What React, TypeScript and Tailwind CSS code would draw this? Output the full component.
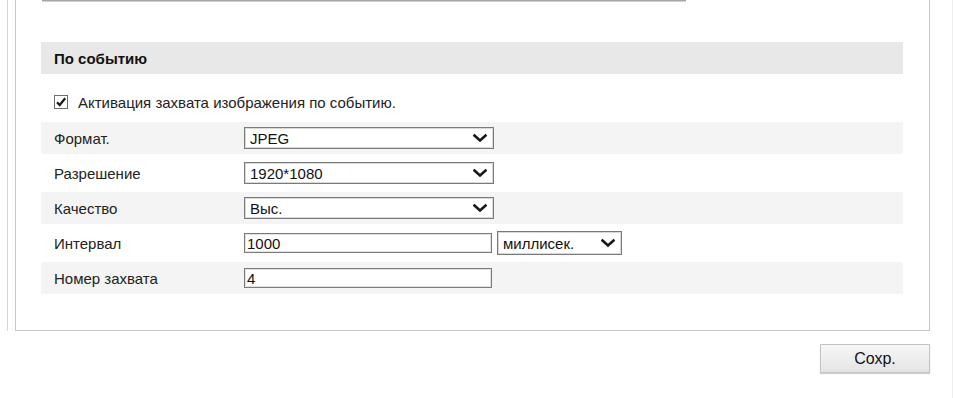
import React from "react";

function Chevron() {
  return (
    <svg width="14" height="10" viewBox="0 0 14 10" className="pointer-events-none absolute right-[6px] top-1/2 -translate-y-1/2">
      <path d="M1.5 2.5 L7 7.5 L12.5 2.5" fill="none" stroke="#1a1a1a" strokeWidth="2.6" strokeLinecap="square" />
    </svg>
  );
}

function Select({ value, w, h }: { value: string; w: string; h: string }) {
  return (
    <div className={`relative ${w} ${h} border border-[#7a7a7a] bg-white shadow-[inset_0_0_0_1px_#d9d9d9] flex items-center pl-[5px] text-[15px] leading-none text-[#111]`}>
      <span>{value}</span>
      <Chevron />
    </div>
  );
}

function TextBox({ value }: { value: string }) {
  return (
    <div className="w-[248px] h-[20px] border border-[#7a7a7a] bg-white shadow-[inset_0_0_0_1px_#e2e2e2] flex items-center pl-[2px] text-[15px] leading-none text-[#111]">
      {value}
    </div>
  );
}

function Row({ label, gray, children }: { label: string; gray?: boolean; children: React.ReactNode }) {
  return (
    <div className={`h-[32px] flex items-center ${gray ? "bg-[#f4f4f4]" : "bg-white"}`}>
      <div className="w-[203px] pl-[13px] text-[15px] leading-none text-[#222]">{label}</div>
      {children}
    </div>
  );
}

export default function App() {
  return (
    <div className="w-[953px] h-[398px] bg-white overflow-hidden flex" style={{ fontFamily: '"Liberation Sans", Arial, sans-serif' }}>
      <div className="flex flex-col">
        <div className="flex">
          <div className="w-[7px]" />
          <div className="h-[331px] border-l border-[#d6d6d6] pl-[7px]">
            <div className="w-[915px] h-[331px] border-l border-r border-b border-[#c8c8c8] flex flex-col">
              <div className="ml-[26px] w-[644px] h-[2px] border-t border-[#a6a6a6] bg-[#d0d0d0]" />
              <div className="mt-[40px] ml-[25px] w-[862px] h-[32px] bg-[#e8e8e8] flex items-center pl-[13px] text-[15px] leading-none font-bold text-[#111]">
                По событию
              </div>
              <div className="ml-[38px] h-[48px] pt-[21px] flex items-start">
                <div className="w-[14px] h-[14px] border border-[#6e6e6e] bg-white flex items-center justify-center">
                  <svg width="12" height="12" viewBox="0 0 12 12">
                    <path d="M2 6.2 L4.7 9 L10.2 2.2" fill="none" stroke="#1a1a1a" strokeWidth="2.2" />
                  </svg>
                </div>
                <span className="ml-[10px] h-[14px] flex items-center text-[15px] leading-none text-[#222]">
                  Активация захвата изображения по событию.
                </span>
              </div>
              <div className="ml-[25px] w-[862px] flex flex-col gap-[3px]">
                <Row label="Формат." gray>
                  <Select value="JPEG" w="w-[250px]" h="h-[22px]" />
                </Row>
                <Row label="Разрешение">
                  <Select value="1920*1080" w="w-[250px]" h="h-[22px]" />
                </Row>
                <Row label="Качество" gray>
                  <Select value="Выс." w="w-[250px]" h="h-[22px]" />
                </Row>
                <Row label="Интервал">
                  <TextBox value="1000" />
                  <div className="ml-[5px]">
                    <Select value="миллисек." w="w-[125px]" h="h-[24px]" />
                  </div>
                </Row>
                <Row label="Номер захвата" gray>
                  <TextBox value="4" />
                </Row>
              </div>
            </div>
          </div>
        </div>
        <div className="mt-[13px] ml-[820px] w-[110px] h-[29px] border border-[#c4c4c4] bg-gradient-to-b from-[#f7f7f7] to-[#e4e4e4] shadow-[0_1px_1px_#d0d0d0] flex items-center justify-center text-[16px] leading-none text-[#111]">
          Сохр.
        </div>
      </div>
      <div className="ml-auto w-px h-[398px] bg-[#eeeeee]" />
    </div>
  );
}
